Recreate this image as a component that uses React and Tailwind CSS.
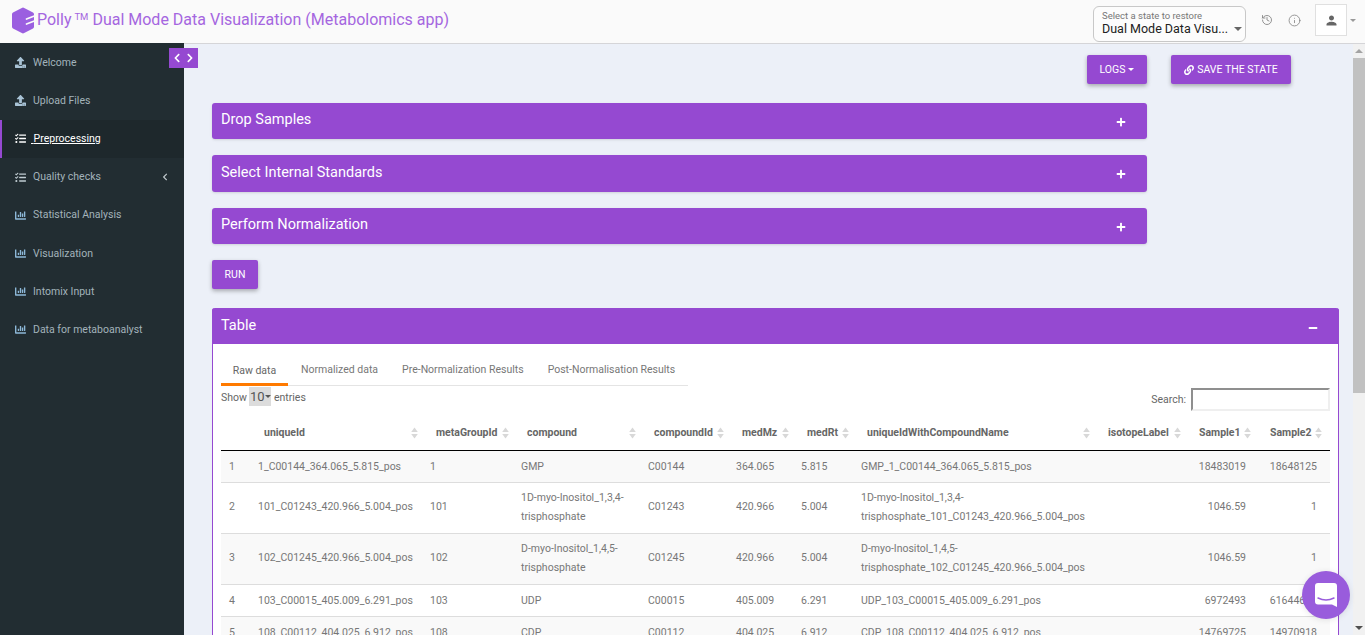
import React from "react";
import { FaUpload, FaTasks, FaChartBar, FaLink, FaChevronLeft, FaChevronRight, FaPlus, FaMinus } from "react-icons/fa";
import { MdPerson } from "react-icons/md";
import { Info, History } from "lucide-react";

const nav = [
  { label: "Welcome", icon: FaUpload, tone: "text-[#a9c3d6]" },
  { label: "Upload Files", icon: FaUpload, tone: "text-[#a9c3d6]" },
  { label: "Preprocessing", icon: FaTasks, tone: "text-white", active: true },
  { label: "Quality checks", icon: FaTasks, tone: "text-[#c0ccd2]", caret: true },
  { label: "Statistical Analysis", icon: FaChartBar, tone: "text-[#8db8d8]" },
  { label: "Visualization", icon: FaChartBar, tone: "text-[#8db8d8]" },
  { label: "Intomix Input", icon: FaChartBar, tone: "text-[#8db8d8]" },
  { label: "Data for metaboanalyst", icon: FaChartBar, tone: "text-[#8db8d8]" },
];

const cols = [
  { name: "", w: "w-[29px]", pr: "pr-[4px]" },
  { name: "uniqueId", w: "w-[172px]", pr: "pr-[4px]" },
  { name: "metaGroupId", w: "w-[91px]", pr: "pr-[4px]" },
  { name: "compound", w: "w-[127px]", pr: "pr-[4px]" },
  { name: "compoundId", w: "w-[88px]", pr: "pr-[4px]" },
  { name: "medMz", w: "w-[65px]", pr: "pr-[4px]" },
  { name: "medRt", w: "w-[60px]", pr: "pr-[4px]" },
  { name: "uniqueIdWithCompoundName", w: "w-[241px]", pr: "pr-[4px]" },
  { name: "isotopeLabel", w: "w-[91px]", pr: "pr-[4px]" },
  { name: "Sample1", w: "w-[71px]", pr: "pr-[5px]" },
  { name: "Sample2", w: "w-[74px]", pr: "pr-[8px]" },
];

const rows = [
  ["1", "1_C00144_364.065_5.815_pos", "1", "GMP", "C00144", "364.065", "5.815", "GMP_1_C00144_364.065_5.815_pos", "", "18483019", "18648125"],
  ["2", "101_C01243_420.966_5.004_pos", "101", "1D-myo-Inositol_1,3,4-trisphosphate", "C01243", "420.966", "5.004", "1D-myo-Inositol_1,3,4-trisphosphate_101_C01243_420.966_5.004_pos", "", "1046.59", "1"],
  ["3", "102_C01245_420.966_5.004_pos", "102", "D-myo-Inositol_1,4,5-trisphosphate", "C01245", "420.966", "5.004", "D-myo-Inositol_1,4,5-trisphosphate_102_C01245_420.966_5.004_pos", "", "1046.59", "1"],
  ["4", "103_C00015_405.009_6.291_pos", "103", "UDP", "C00015", "405.009", "6.291", "UDP_103_C00015_405.009_6.291_pos", "", "6972493", "61644670"],
  ["5", "108_C00112_404.025_6.912_pos", "108", "CDP", "C00112", "404.025", "6.912", "CDP_108_C00112_404.025_6.912_pos", "", "14769725", "14970918"],
];

function SortIcon() {
  return (
    <svg width="7" height="12" viewBox="0 0 7 12" className="shrink-0">
      <path d="M3.5 0.5 L6.8 5 H0.2 Z" fill="#d8d8d8" />
      <path d="M3.5 11.5 L6.8 7 H0.2 Z" fill="#d8d8d8" />
    </svg>
  );
}

function Logo() {
  return (
    <svg width="22" height="27" viewBox="0 0 22 27" className="mb-[2px] shrink-0">
      <path d="M11 0.5 Q11.6 0.5 12.2 0.9 L21 5.6 Q22 6.2 22 7.3 V19.7 Q22 20.8 21 21.4 L12.2 26.1 Q11 26.7 9.8 26.1 L1 21.4 Q0 20.8 0 19.7 V7.3 Q0 6.2 1 5.6 L9.8 0.9 Q10.4 0.5 11 0.5 Z" fill="#9b5fe0" />
      <path d="M14.5 12 L23 8.8 M14.5 17 L23 13.8" stroke="#fafafa" strokeWidth="1.7" fill="none" strokeLinecap="round" />
    </svg>
  );
}

function Panel({ title, offset }) {
  return (
    <div className="flex h-[36.3px] w-[935px] items-center justify-between rounded-[3px] bg-[#9549d1] pl-[9px] pr-[21px] text-white shadow-sm">
      <span className={`text-[14.5px] leading-none ${offset}`}>{title}</span>
      <FaPlus className="mt-[2px] text-[10px]" />
    </div>
  );
}

export default function App() {
  return (
    <div className="relative flex h-[635px] w-[1365px] flex-col overflow-hidden bg-[#ecf0f8] font-['Roboto',sans-serif]">
      <header className="flex h-[44px] shrink-0 items-center border-b border-[#d5d5d8] bg-[#fafafa] pl-[12px]">
        <Logo />
        <h1 className="mb-[3px] ml-[3px] flex-1 whitespace-nowrap text-[16px] text-[#a566e0]">
          Polly <span className="relative top-[-5px] ml-[-1px] text-[9.5px]">TM</span> Dual Mode Data Visualization (Metabolomics app)
        </h1>
        <div className="relative mr-[15px] mt-[5px] h-[36px] w-[153px] rounded-[6px] border border-[#c8c8c8] bg-white/40 pl-[8px] pt-[3px]">
          <div className="text-[9.5px] leading-[11px] text-[#777]">Select a state to restore</div>
          <div className="text-[12.5px] leading-[15px] text-[#222]">Dual Mode Data Visu...</div>
          <span className="absolute right-[3px] top-[20px] h-0 w-0 border-x-[4px] border-t-[4px] border-x-transparent border-t-[#666]" />
        </div>
        <History size={12} strokeWidth={1.8} className="mb-[3px] mr-[15px] text-[#888]" />
        <Info size={13} strokeWidth={1.6} className="mb-[3px] mr-[14px] text-[#888]" />
        <div className="mb-[3px] mr-[3px] flex h-[32px] w-[32px] items-center justify-center border border-[#e0e0e0] bg-white">
          <MdPerson className="text-[15px] text-[#666]" />
        </div>
        <span className="mb-[3px] mr-[9px] h-0 w-0 border-x-[3px] border-t-[3px] border-x-transparent border-t-[#999]" />
      </header>

      <div className="flex min-h-0 flex-1">
        <aside className="relative -mt-px w-[184px] shrink-0 bg-[#222d32] pt-[0.4px]">
          {nav.map((n) => {
            const Icon = n.icon;
            return (
              <div
                key={n.label}
                className={`flex h-[38.2px] items-center text-[10.5px] ${n.active ? "border-l-2 border-[#9549d1] bg-[#1e282c] pl-[13px] text-white" : "pl-[15px] text-[#a3b3bb]"}`}
              >
                <Icon className={`w-[11px] shrink-0 text-[11px] ${n.tone}`} />
                {n.active ? (
                  <span className="ml-[5px] underline">&nbsp;{n.label}</span>
                ) : (
                  <span className="ml-[7px]">{n.label}</span>
                )}
                {n.caret && <FaChevronLeft className="ml-auto mr-[15px] text-[8px] text-[#c0c8cc]" />}
              </div>
            );
          })}
          <div className="absolute left-[169px] top-[5px] flex h-[20px] w-[29px] items-center justify-around bg-[#9549d1] px-[2px] text-white">
            <FaChevronLeft className="text-[10px]" />
            <FaChevronRight className="text-[10px]" />
          </div>
        </aside>

        <main className="min-w-0 flex-1 pl-[28px]">
          <div className="flex justify-end gap-[24px] pr-[62px] pt-[11px]">
            <button className="flex h-[29px] w-[60px] items-center justify-center gap-[3px] rounded-[2px] bg-[#9549d1] text-[10.5px] text-white shadow-[0_2px_4px_rgba(0,0,0,0.3)]">
              LOGS
              <span className="h-0 w-0 border-x-[3px] border-t-[3px] border-x-transparent border-t-white" />
            </button>
            <button className="flex h-[29px] w-[120px] items-center justify-center gap-[3px] rounded-[2px] bg-[#9549d1] text-[10.5px] text-white shadow-[0_2px_4px_rgba(0,0,0,0.3)]">
              <FaLink className="text-[10px]" />
              SAVE THE STATE
            </button>
          </div>

          <div className="mt-[19px] flex flex-col gap-[16px]">
            <Panel title="Drop Samples" offset="mb-[2px]" />
            <Panel title="Select Internal Standards" offset="mb-0" />
            <Panel title="Perform Normalization" offset="mb-0" />
          </div>

          <button className="mt-[16px] block h-[29px] w-[46px] rounded-[2px] bg-[#9549d1] text-[10.5px] text-white shadow-[0_2px_4px_rgba(0,0,0,0.3)]">
            RUN
          </button>

          <section className="mt-[19px] w-[1127px] rounded-t-[3px] border-x border-[#9549d1] bg-white">
            <div className="-mx-px flex h-[36px] items-center justify-between rounded-t-[3px] bg-[#9549d1] pl-[9px] pr-[21px] text-white">
              <span className="mt-[1px] text-[14.5px] leading-none">Table</span>
              <FaMinus className="mt-[5px] text-[10px]" />
            </div>
            <div className="px-[8px]">
              <div className="mt-[14px] flex h-[28px] w-[467px] border-b border-[#e4e4e4] text-[10.5px] text-[#777]">
                <div className="flex h-[28px] w-[67px] items-center justify-center border-b-[3px] border-[#ff7a00] text-[#666]">Raw data</div>
                <div className="flex h-[24px] items-center pl-[13px]">Normalized data</div>
                <div className="flex h-[24px] items-center pl-[24px]">Pre-Normalization Results</div>
                <div className="flex h-[24px] items-center pl-[24px]">Post-Normalisation Results</div>
              </div>
              <div className="flex h-[29px] items-start justify-between pt-[1px] text-[10.5px] text-[#666]">
                <div className="flex items-center">
                  <span className="mt-[3px]">Show</span>
                  <span className="ml-[2px] flex h-[19px] w-[22px] items-center bg-[#dcdcdc] pl-[1px] text-[13px] text-[#555]">
                    10
                    <span className="h-0 w-0 border-x-[3px] border-t-[3px] border-x-transparent border-t-[#555]" />
                  </span>
                  <span className="ml-[3px] mt-[3px]">entries</span>
                </div>
                <div className="mt-[1px] flex items-center gap-[5px]">
                  <span>Search:</span>
                  <input aria-label="Search" className="h-[23px] w-[139px] border-2 border-b-[#efefef] border-l-[#8f8f8f] border-r-[#efefef] border-t-[#8f8f8f] bg-white" />
                </div>
              </div>
              <table className="w-[1109px] table-fixed border-collapse text-[10.5px] text-[#777]">
                <colgroup>
                  {cols.map((c) => (
                    <col key={c.name} className={c.w} />
                  ))}
                </colgroup>
                <thead>
                  <tr className="h-[36px] border-b-[1.5px] border-black">
                    {cols.map((c) => (
                      <th key={c.name} className={`pl-[14px] ${c.pr} text-left text-[10.5px] font-bold text-[#666]`}>
                        {c.name && (
                          <div className="flex items-center justify-between">
                            <span className="whitespace-nowrap">{c.name}</span>
                            <SortIcon />
                          </div>
                        )}
                      </th>
                    ))}
                  </tr>
                </thead>
                <tbody>
                  {rows.map((r, i) => {
                    const tall = i === 1 || i === 2;
                    return (
                      <tr key={r[0]} className={`border-b border-[#ddd] ${i % 2 === 0 ? "bg-[#f9f9f9]" : "bg-white"}`}>
                        {r.map((v, j) => {
                          const wraps = j === 3 || j === 7;
                          const pad = tall ? (wraps ? "pt-[5px] pb-[7px]" : "pt-[6px] pb-[10px]") : "pt-[6px] pb-[6px]";
                          const side = j === 9 ? "pr-[10px] text-right" : j === 10 ? "pr-[13px] text-right" : "pr-[8px]";
                          return (
                            <td key={j} className={`pl-[8px] leading-[19px] ${pad} ${side}`}>
                              {v}
                            </td>
                          );
                        })}
                      </tr>
                    );
                  })}
                </tbody>
              </table>
            </div>
          </section>
        </main>

        <div className="flex w-[12px] shrink-0 flex-col bg-[#f1f1f1]">
          <div className="flex h-[14px] shrink-0 items-center justify-center">
            <span className="h-0 w-0 border-x-[4px] border-b-[4px] border-x-transparent border-b-[#a3a3a3]" />
          </div>
          <div className="h-[335px] shrink-0 bg-[#c1c1c1]" />
          <div className="mt-auto flex h-[14px] shrink-0 items-center justify-center">
            <span className="h-0 w-0 border-x-[4px] border-t-[4px] border-x-transparent border-t-[#505050]" />
          </div>
        </div>
      </div>

      <div className="absolute left-[1302px] top-[571px] flex h-[48px] w-[48px] items-center justify-center rounded-full bg-[#995cdc] shadow-[0_1px_6px_rgba(0,0,0,0.1)]">
        <svg width="22" height="24" viewBox="0 0 22 24">
          <path d="M3 0 H19 A3 3 0 0 1 22 3 V24 L17 21.5 H3 A3 3 0 0 1 0 18.5 V3 A3 3 0 0 1 3 0 Z" fill="#fff" />
          <path d="M3 15 Q11 19 19 15" stroke="#995cdc" strokeWidth="1.4" fill="none" strokeLinecap="round" />
        </svg>
      </div>
    </div>
  );
}
